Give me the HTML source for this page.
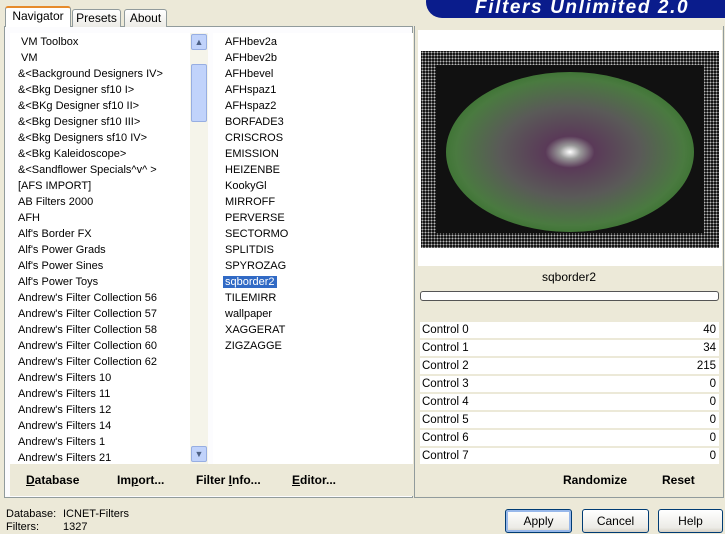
<!DOCTYPE html>
<html><head><style>
*{margin:0;padding:0;box-sizing:border-box}
body{width:725px;height:534px;background:#ECE9D8;font-family:"Liberation Sans",sans-serif;font-size:11px;color:#000;position:relative;overflow:hidden}
.abs{position:absolute}
.tab{position:absolute;top:9px;height:18px;border:1px solid #919B9C;border-bottom:none;background:linear-gradient(#fff,#ECEBE6);text-align:center;line-height:16px;border-radius:3px 3px 0 0;font-size:12px}
.list div{height:16px;line-height:18px;white-space:nowrap}
.ctl{position:absolute;left:420px;width:299px;height:16px;background:#fff;line-height:16px;padding-left:2px;font-size:11.5px}
.ctl span{position:absolute;right:3px}
.btn{position:absolute;top:509px;height:24px;border:1px solid #003C74;border-radius:3px;background:linear-gradient(#fff,#ECEBE6 80%,#D6D0C5);text-align:center;line-height:22px;font-size:12px}
.b{font-weight:bold;font-size:12px}
</style></head><body>
<div class="abs" style="left:4px;top:26px;width:409px;height:472px;border:1px solid #919B9C;background:#FCFCFE"></div>
<div class="tab" style="left:5px;top:6px;width:66px;height:21px;background:#fff;border-top:2px solid #E68B2C;z-index:2">Navigator</div>
<div class="tab" style="left:72px;width:49px">Presets</div>
<div class="tab" style="left:124px;width:43px">About</div>
<div class="abs list" style="left:10px;top:33px;width:180px;height:431px;background:#fff;overflow:hidden;padding-left:8px">
<div>&nbsp;VM Toolbox</div><div>&nbsp;VM</div><div>&amp;&lt;Background Designers IV&gt;</div><div>&amp;&lt;Bkg Designer sf10 I&gt;</div><div>&amp;&lt;BKg Designer sf10 II&gt;</div><div>&amp;&lt;Bkg Designer sf10 III&gt;</div><div>&amp;&lt;Bkg Designers sf10 IV&gt;</div><div>&amp;&lt;Bkg Kaleidoscope&gt;</div><div>&amp;&lt;Sandflower Specials^v^ &gt;</div><div>[AFS IMPORT]</div><div>AB Filters 2000</div><div>AFH</div><div>Alf's Border FX</div><div>Alf's Power Grads</div><div>Alf's Power Sines</div><div>Alf's Power Toys</div><div>Andrew's Filter Collection 56</div><div>Andrew's Filter Collection 57</div><div>Andrew's Filter Collection 58</div><div>Andrew's Filter Collection 60</div><div>Andrew's Filter Collection 62</div><div>Andrew's Filters 10</div><div>Andrew's Filters 11</div><div>Andrew's Filters 12</div><div>Andrew's Filters 14</div><div>Andrew's Filters 1</div><div>Andrew's Filters 21</div>
</div>
<div class="abs" style="left:190px;top:33px;width:18px;height:431px;background:#F5F4EA"></div>
<div class="abs" style="left:191px;top:34px;width:16px;height:16px;background:#C1D3FB;border:1px solid #97AEE2;border-radius:2px;text-align:center;font-size:9px;line-height:14px;color:#4D6185">▲</div>
<div class="abs" style="left:191px;top:64px;width:16px;height:58px;background:#C1D3FB;border:1px solid #97AEE2;border-radius:2px"></div>
<div class="abs" style="left:191px;top:446px;width:16px;height:16px;background:#C1D3FB;border:1px solid #97AEE2;border-radius:2px;text-align:center;font-size:9px;line-height:14px;color:#4D6185">▼</div>
<div class="abs list" style="left:213px;top:33px;width:200px;height:431px;background:#fff;padding-left:12px">
<div>AFHbev2a</div><div>AFHbev2b</div><div>AFHbevel</div><div>AFHspaz1</div><div>AFHspaz2</div><div>BORFADE3</div><div>CRISCROS</div><div>EMISSION</div><div>HEIZENBE</div><div>KookyGl</div><div>MIRROFF</div><div>PERVERSE</div><div>SECTORMO</div><div>SPLITDIS</div><div>SPYROZAG</div><div><span style="background:#316AC5;color:#fff;padding:0 2px;margin-left:-2px">sqborder2</span></div><div>TILEMIRR</div><div>wallpaper</div><div>XAGGERAT</div><div>ZIGZAGGE</div>
</div>
<div class="abs" style="left:10px;top:464px;width:403px;height:32px;background:#ECE9D8"></div>
<div class="abs b" style="left:26px;top:473px"><u>D</u>atabase</div>
<div class="abs b" style="left:117px;top:473px">Im<u>p</u>ort...</div>
<div class="abs b" style="left:196px;top:473px">Filter <u>I</u>nfo...</div>
<div class="abs b" style="left:292px;top:473px"><u>E</u>ditor...</div>
<div class="abs" style="left:414px;top:26px;width:310px;height:472px;border-left:1px solid #919B9C;border-right:1px solid #919B9C;border-bottom:1px solid #919B9C"></div>
<div class="abs" style="left:418px;top:30px;width:304px;height:236px;background:#fff"></div>
<div class="abs" style="left:421px;top:51px;width:298px;height:197px;background:#000;background-image:radial-gradient(circle,#bbb 0.9px,transparent 1.2px);background-size:3px 3px"></div>
<div class="abs" style="left:436px;top:65px;width:268px;height:168px;background:#111"></div>
<div class="abs" style="left:446px;top:72px;width:248px;height:160px;border-radius:50%;background:radial-gradient(ellipse,#fff 0,#999 6%,#5a3a58 14%,#5a5a58 40%,#4a7a40 65%,#2a6a20 85%,#111 100%)"></div>
<div class="abs" style="left:420px;top:270px;width:298px;text-align:center;font-size:12px">sqborder2</div>
<div class="abs" style="left:420px;top:291px;width:299px;height:10px;border:1px solid #555;border-radius:3px;background:#fff"></div>
<div class="ctl" style="top:322px">Control 0<span>40</span></div>
<div class="ctl" style="top:340px">Control 1<span>34</span></div>
<div class="ctl" style="top:358px">Control 2<span>215</span></div>
<div class="ctl" style="top:376px">Control 3<span>0</span></div>
<div class="ctl" style="top:394px">Control 4<span>0</span></div>
<div class="ctl" style="top:412px">Control 5<span>0</span></div>
<div class="ctl" style="top:430px">Control 6<span>0</span></div>
<div class="ctl" style="top:448px">Control 7<span>0</span></div>
<div class="abs b" style="left:563px;top:473px">Randomize</div>
<div class="abs b" style="left:662px;top:473px">Reset</div>
<div class="abs" style="left:426px;top:-14px;width:320px;height:32px;background:#0A1C8C;border-radius:16px 0 0 16px"></div>
<div class="abs" style="left:475px;top:-3px;color:#fff;font-weight:bold;font-style:italic;font-size:19px;letter-spacing:1.6px">Filters Unlimited 2.0</div>
<div class="abs" style="left:6px;top:508px;line-height:13px">Database:<br>Filters:</div>
<div class="abs" style="left:63px;top:508px;line-height:13px">ICNET-Filters<br>1327</div>
<div class="btn" style="left:505px;width:67px;border-color:#003C74;box-shadow:inset 0 0 0 2px #98B8EA">Apply</div>
<div class="btn" style="left:582px;width:67px">Cancel</div>
<div class="btn" style="left:658px;width:65px">Help</div>
</body></html>
